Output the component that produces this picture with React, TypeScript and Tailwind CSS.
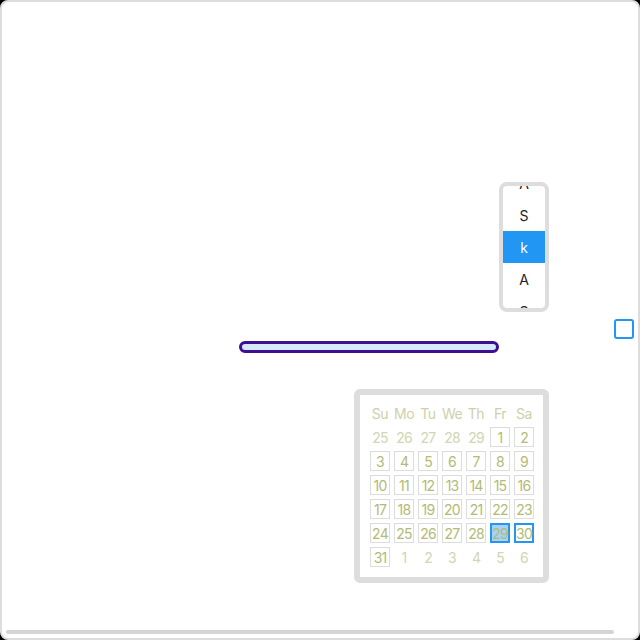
import React from "react";

const font = { fontFamily: "Inter, 'Noto Sans', sans-serif" };

function Listbox() {
  const items = ["A", "S", "k", "A", "S"];
  return (
    <div className="w-[50px] h-[130px] border-4 border-[#dddddd] rounded-lg bg-white overflow-hidden">
      <div className="-mt-[19px] flex flex-col">
        {items.map((it, i) => (
          <div
            key={i}
            className={
              "h-8 flex items-center justify-center text-[14px] " +
              (i === 2 ? "bg-[#2196f3] text-white" : "text-[#222222]")
            }
          >
            {it}
          </div>
        ))}
      </div>
    </div>
  );
}

function Calendar() {
  const heads = ["Su", "Mo", "Tu", "We", "Th", "Fr", "Sa"];
  const days: { d: number; cur: boolean }[] = [];
  [25, 26, 27, 28, 29].forEach((d) => days.push({ d, cur: false }));
  for (let d = 1; d <= 31; d++) days.push({ d, cur: true });
  [1, 2, 3, 4, 5, 6].forEach((d) => days.push({ d, cur: false }));
  return (
    <div className="w-[195px] h-[194px] border-[6px] border-[#dddddd] rounded-md bg-white pt-2 pl-[10px]">
      <div className="grid grid-cols-[repeat(7,20px)] gap-x-1 gap-y-1">
        {heads.map((h) => (
          <div key={h} className="h-5 flex items-center justify-center text-[14px] text-[#cdd1a9] tracking-[-0.5px]">
            {h}
          </div>
        ))}
        {days.map((x, i) => {
          const sel = x.cur && x.d === 29;
          const foc = x.cur && x.d === 30;
          let cls = "h-5 w-5 flex items-center justify-center text-[14px] tracking-[-0.8px] ";
          if (!x.cur) cls += "text-[#d2d5b3]";
          else if (sel) cls += "border-2 border-[#2196f3] bg-[#a8d2f6] text-[#b3ba74]";
          else if (foc) cls += "border-2 border-[#2196f3] text-[#b3ba74]";
          else cls += "border border-[#dddddd] text-[#b3ba74]";
          return (
            <div key={i} className={cls}>
              {x.d}
            </div>
          );
        })}
      </div>
    </div>
  );
}

export default function App() {
  return (
    <div className="w-[640px] h-[640px] bg-black" style={font}>
      <div className="w-[640px] h-[640px] border-2 border-[#dddddd] rounded-lg bg-white flex flex-col overflow-hidden">
        <div className="mt-[180px] ml-[497px]">
          <Listbox />
        </div>
        <div className="mt-[7px] flex items-start">
          <div className="ml-[237px] mt-[22px] w-[260px] h-3 rounded-full border-[3px] border-[#3d1090] bg-[#d6e8fa]" />
          <div className="ml-[115px] w-5 h-5 rounded-[3px] border-2 border-[#2196f3] bg-white" />
        </div>
        <div className="mt-[36px] ml-[352px]">
          <Calendar />
        </div>
        <div className="mt-auto mb-[4px] ml-[4px] w-[608px] h-[4px] rounded-full bg-[#d4d4d4]" />
      </div>
    </div>
  );
}
